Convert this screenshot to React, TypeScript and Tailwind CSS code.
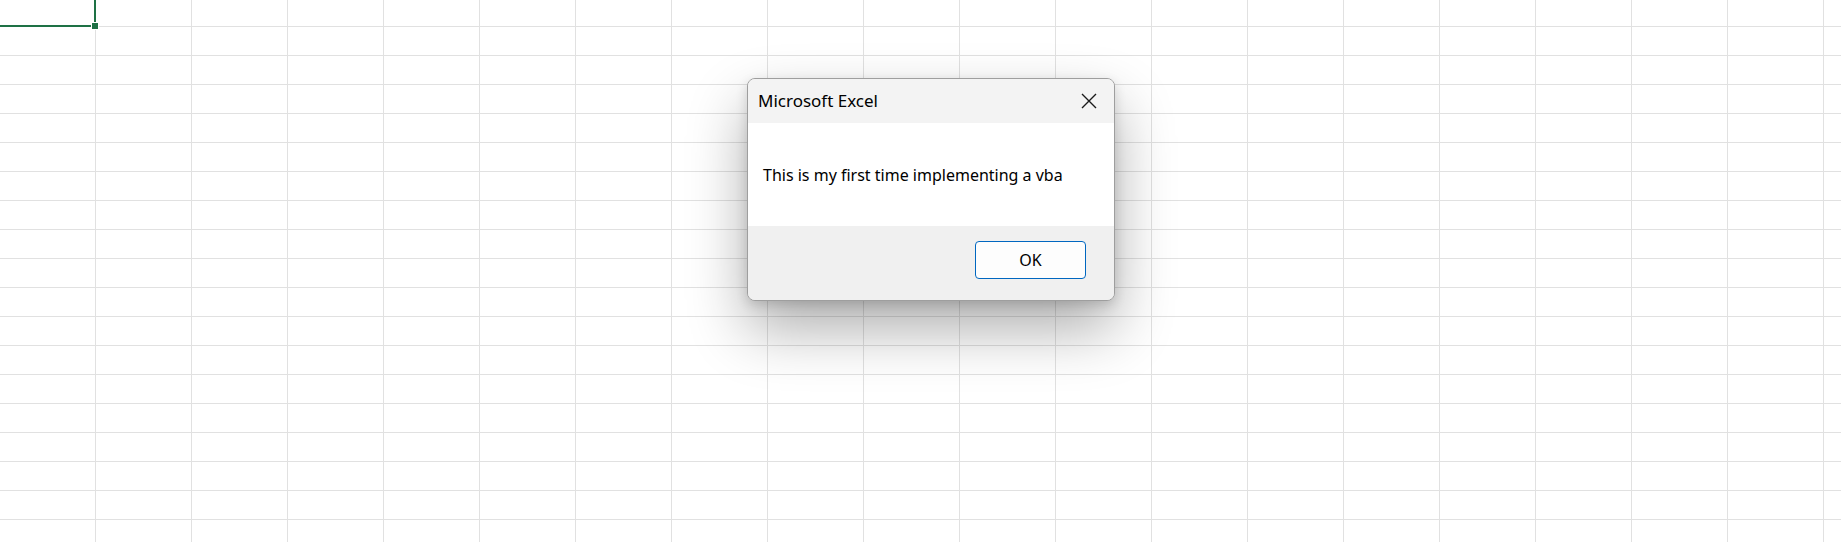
const COLS = 20;
const ROWS = 19;

function Sheet() {
  const cells = [];
  for (let r = 0; r < ROWS; r++) {
    for (let c = 0; c < COLS; c++) {
      cells.push(
        <div
          key={`${r}-${c}`}
          className={`border-r border-b border-[#e1e1e1] ${r === 0 ? "h-[27px]" : "h-[29px]"}`}
        />
      );
    }
  }
  return (
    <div className="grid grid-cols-[repeat(20,96px)] bg-white">{cells}</div>
  );
}

function CloseIcon() {
  return (
    <svg width="16" height="16" viewBox="0 0 16 16" fill="none" stroke="#1a1a1a" strokeWidth="1.4">
      <path d="M1 1 L15 15 M15 1 L1 15" />
    </svg>
  );
}

function MessageBox() {
  return (
    <div className="absolute left-[747px] top-[78px] flex w-[368px] flex-col overflow-hidden rounded-[8px] border border-[#9e9e9e] bg-[#f0f0f0] font-['Noto_Sans',sans-serif] text-black shadow-[0_28px_60px_rgba(0,0,0,0.32),0_4px_12px_rgba(0,0,0,0.14)]">
      <div className="flex h-[44px] items-center justify-between bg-[#f3f3f3] pl-[10px] pr-[17px]">
        <span className="text-[17px]">Microsoft Excel</span>
        <CloseIcon />
      </div>
      <div className="flex h-[103px] items-center bg-white px-[15px] pt-[1px] text-[16px]">
        This is my first time implementing a vba
      </div>
      <div className="flex h-[74px] items-start justify-end bg-[#f0f0f0] pt-[15px] pr-[28px]">
        <button className="h-[38px] w-[111px] rounded-[4px] border border-[#0067c0] bg-[#fdfdfd] text-[16px]">
          OK
        </button>
      </div>
    </div>
  );
}

export default function App() {
  return (
    <div className="relative h-[542px] w-[1841px] overflow-hidden bg-white">
      <Sheet />
      {/* active cell outline */}
      <div className="absolute left-0 top-[25px] h-[2px] w-[92px] bg-[#1e7145]" />
      <div className="absolute left-[94px] top-0 h-[22px] w-[2px] bg-[#1e7145]" />
      <div className="absolute left-[92px] top-[23px] size-[6px] bg-[#1e7145] outline outline-1 outline-white" />
      <MessageBox />
    </div>
  );
}
